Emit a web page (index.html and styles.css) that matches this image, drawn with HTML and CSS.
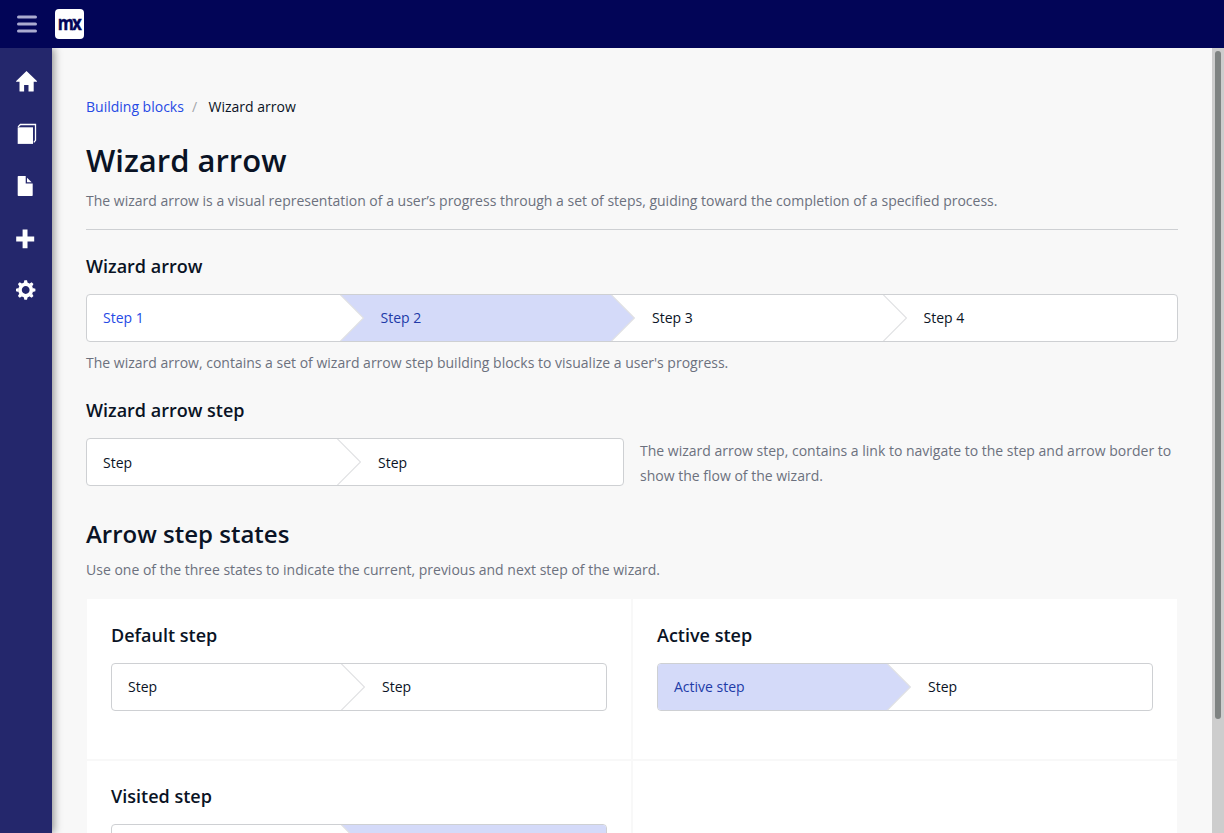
FILE: index.html
```html
<!DOCTYPE html>
<html lang="en">
<head>
<meta charset="utf-8">
<title>Wizard arrow</title>
<link rel="stylesheet" href="styles.css">
</head>
<body>
<header class="topbar">
  <svg class="menu" width="20" height="18" viewBox="0 0 20 18"><path d="M1.500 1.900h17M1.500 9h17M1.500 16.100h17" fill="none" stroke="#aaabd0" stroke-width="3" stroke-linecap="round"/></svg>
  <div class="logo"><span>mx</span></div>
</header>
<div class="shell">
  <nav class="sidebar">
    <a class="nav-item"><svg width="22" height="22" viewBox="-.5 .7 22 22"><path d="M11 .8 21.400 10.800c.3.4.1.7-.3.7H18.200v9.100c0 .4-.2.6-.6.6H13v-6.500H8.600v6.500h-4c-.4 0-.6-.2-.6-.6v-9.100H1c-.5 0-.6-.4-.3-.7z"/></svg></a>
    <a class="nav-item"><svg width="22" height="22" viewBox="-.7 0 22 22"><path d="M2 4.300h15.300v16.600H2z"/><path d="M2.300 3.900 4.700 1.500h15.100v15.800l-1.700 2" fill="none" stroke="#fff" stroke-width="1.300"/></svg></a>
    <a class="nav-item"><svg width="22" height="22" viewBox="-.7 0 22 22"><path d="M2 1.700C2 1.200 2.200 1 2.700 1H10v7.500h7v11.800c0 .5-.2.7-.7.700H2.700c-.5 0-.7-.2-.7-.7z"/><path d="M11.300 2.700 16 7.300h-4.700z"/></svg></a>
    <a class="nav-item"><svg width="22" height="22" viewBox="-.4 -.3 22 22"><path d="M7.200 2.300h4.900v6.900h6.700v4.900h-6.700V21H7.200v-6.900H.8V9.200h6.400z"/></svg></a>
    <a class="nav-item"><svg width="22" height="22" viewBox="0 0 22 22"><g transform="translate(10.700 11)"><circle r="5.700" fill="none" stroke="#fff" stroke-width="3.600"/><g id="teeth"><path d="M-2-7-1.300-9.700h2.600L2-7zM-2 7l.7 2.700h2.600L2 7zM-7-2l-2.700.7v2.600L-7 2zM7-2l2.700.7v2.600L7 2z"/></g><use href="#teeth" transform="rotate(45)"/></g></svg></a>
  </nav>
  <main class="content">
    <div class="breadcrumb"><a>Building blocks</a><i>/</i><span>Wizard arrow</span></div>
    <h1>Wizard arrow</h1>
    <p class="lead">The wizard arrow is a visual representation of a user’s progress through a set of steps, guiding toward the completion of a specified process.</p>
    <h3 class="after-rule">Wizard arrow</h3>
    <div class="wizard four">
      <div class="step visited"><span>Step 1</span><svg class="arrow to-active" viewBox="0 0 24 46"><path d="M0-.5 23.500 23 0 46.500"/></svg></div>
      <div class="step active"><span>Step 2</span><svg class="arrow" viewBox="0 0 24 46"><path d="M0-.5 23.500 23 0 46.500"/></svg></div>
      <div class="step"><span>Step 3</span><svg class="arrow" viewBox="0 0 24 46"><path d="M0-.5 23.500 23 0 46.500"/></svg></div>
      <div class="step"><span>Step 4</span></div>
    </div>
    <p class="note">The wizard arrow, contains a set of wizard arrow step building blocks to visualize a user's progress.</p>
    <h3 class="second">Wizard arrow step</h3>
    <div class="split">
      <div class="wizard two wide">
        <div class="step"><span>Step</span><svg class="arrow" viewBox="0 0 24 46"><path d="M0-.5 23.500 23 0 46.500"/></svg></div>
        <div class="step"><span>Step</span></div>
      </div>
      <p>The wizard arrow step, contains a link to navigate to the step and arrow border to show the flow of the wizard.</p>
    </div>
    <h2>Arrow step states</h2>
    <p class="states-note">Use one of the three states to indicate the current, previous and next step of the wizard.</p>
    <div class="states">
      <section class="card">
        <h3>Default step</h3>
        <div class="wizard two">
          <div class="step"><span>Step</span><svg class="arrow" viewBox="0 0 24 46"><path d="M0-.5 23.500 23 0 46.500"/></svg></div>
          <div class="step"><span>Step</span></div>
        </div>
      </section>
      <section class="card">
        <h3>Active step</h3>
        <div class="wizard two">
          <div class="step active"><span>Active step</span><svg class="arrow" viewBox="0 0 24 46"><path d="M0-.5 23.500 23 0 46.500"/></svg></div>
          <div class="step"><span>Step</span></div>
        </div>
      </section>
      <section class="card">
        <h3>Visited step</h3>
        <div class="wizard two">
          <div class="step visited"><span>Visited step</span><svg class="arrow to-active" viewBox="0 0 24 46"><path d="M0-.5 23.500 23 0 46.500"/></svg></div>
          <div class="step active"><span>Active step</span></div>
        </div>
      </section>
      <section class="card"></section>
    </div>
  </main>
  <div class="scrollbar"><div class="thumb"></div></div>
</div>
</body>
</html>
```
FILE: styles.css
```css
* { box-sizing: border-box; }
body {
  margin: 0;
  height: 100vh;
  overflow: hidden;
  display: flex;
  flex-direction: column;
  font: 14px/25px "Open Sans", sans-serif;
  color: #0a1325;
  background: #f8f8f8;
}
h1, h2, h3, p { margin: 0; }
h1, h2, h3 { font-weight: 600; }
p { color: #6c717e; }

.topbar {
  flex: none;
  height: 48px;
  padding-left: 17px;
  display: flex;
  align-items: center;
  gap: 18px;
  background: #020557;
}
.logo {
  width: 29px;
  height: 30px;
  border-radius: 4px;
  background: #fff;
  display: flex;
  align-items: center;
  justify-content: center;
  font: bold 19px/22px "Open Sans", sans-serif;
  letter-spacing: -1.8px;
  color: #020557;
}
.logo span { margin: -3px 0 0 -1px; -webkit-text-stroke: .5px #020557; transform: scaleX(.86); }

.shell { flex: 1; min-height: 0; display: flex; }
.sidebar {
  position: relative;
  z-index: 1;
  flex: none;
  width: 52px;
  padding-top: 8px;
  background: #24276c;
  box-shadow: 2px 0 8px rgba(0, 0, 0, .42);
  clip-path: inset(0 -20px 0 0);
}
.nav-item {
  height: 52px;
  padding-left: 15px;
  display: flex;
  align-items: center;
}
.nav-item svg { fill: #fff; }

.content { flex: 1; min-width: 0; overflow: hidden; padding: 49px 34px 0; }

.breadcrumb { display: flex; line-height: 20px; }
.breadcrumb a { color: #264ae5; }
.breadcrumb i { font-style: normal; color: #a3a5aa; margin: 0 11.500px 0 8px; }
h1 { font-size: 31px; line-height: 42px; margin-top: 22px; }
.lead { margin-top: 7px; padding-bottom: 16px; border-bottom: 1px solid #ced0d3; }
h3 { font-size: 18px; line-height: 26px; margin-bottom: 15px; }
.after-rule { margin-top: 23px; }
.note { margin-top: 8px; }
.second { margin-top: 22px; }
h2 { font-size: 24px; line-height: 34px; margin-top: 29px; }
.states-note { margin-top: 6px; }

.split { display: grid; grid-template-columns: 538px 1fr; column-gap: 16px; height: 50px; }

.wizard {
  height: 48px;
  display: grid;
  border: 1px solid #ced0d3;
  border-radius: 4px;
  background: #fff;
  overflow: hidden;
}
.four { grid-template-columns: 276.600px 271.500px 271.500px 1fr; }
.two { grid-template-columns: 253px 1fr; }
.two.wide { grid-template-columns: 274px 1fr; }
.step { display: flex; align-items: center; justify-content: space-between; padding-left: 16px; }
.step + .step { padding-left: 17px; }
.step span { padding-bottom: 2px; }
.wide .step span { padding-bottom: 0; }
.step.visited { color: #264ae5; }
.step.active { background: #d4daf9; color: #213aa8; }
.arrow { width: 24px; height: 46px; background: #fff; fill: #fff; stroke: #e0e1e3; stroke-width: 1.200; }
.active .arrow { fill: #d4daf9; }
.arrow.to-active { background: #d4daf9; }

.states {
  margin-top: 17px;
  padding: 0 1px;
  display: grid;
  grid-template-columns: 1fr 1fr;
  grid-auto-rows: 160px;
  gap: 2px;
}
.card { background: #fff; padding: 23px 24px; }
.states .card:nth-child(n+3) { padding-top: 22px; }

.scrollbar { flex: none; width: 12px; padding: 3px; background: #cdcdcd; }
.thumb { height: 668px; border-radius: 3px; background: #7f8382; }
```
